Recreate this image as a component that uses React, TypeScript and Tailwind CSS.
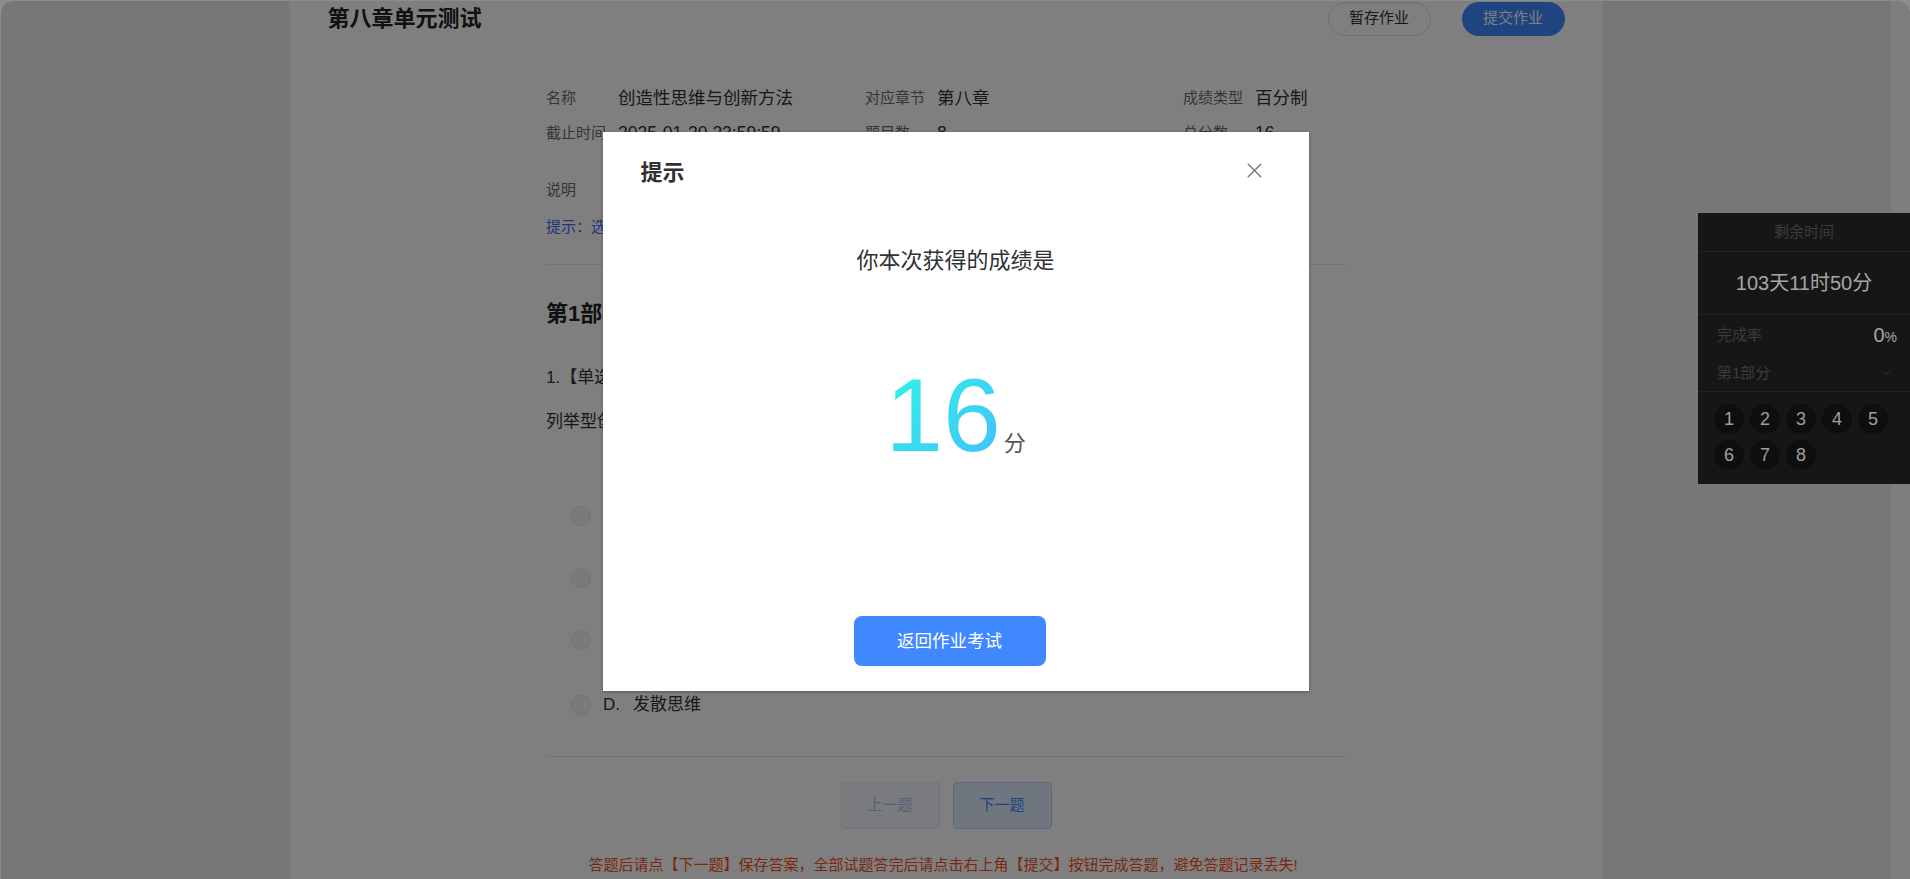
import React from 'react'
import { X, ChevronDown } from 'lucide-react'

const INFO = [
  [
    ['名称', '创造性思维与创新方法'],
    ['对应章节', '第八章'],
    ['成绩类型', '百分制'],
  ],
  [
    ['截止时间', '2025-01-20 23:59:59'],
    ['题目数', '8'],
    ['总分数', '16'],
  ],
]

const OPTIONS = [
  { key: 'A', text: '逆向思维', mt: 'mt-[59px]' },
  { key: 'B', text: '收敛思维', mt: 'mt-[22px]' },
  { key: 'C', text: '联想思维', mt: 'mt-[22px]' },
  { key: 'D', text: '发散思维', mt: 'mt-[25px]' },
]

// 右侧答题卡
const TimerPanel = () => (
  <div className="absolute right-0 top-[212px] z-20 w-[212px] bg-[#161616]">
    <div className="h-[39px] flex items-center justify-center border-b border-[#222] text-[15px] text-[#3c3c3c]">
      剩余时间
    </div>
    <div className="h-[63px] flex items-center justify-center border-b border-[#222] text-[20px] text-[#a6a6a6]">
      103天11时50分
    </div>
    <div className="h-[40px] flex items-center justify-between pl-[19px] pr-[13px]">
      <span className="text-[15px] text-[#3c3c3c]">完成率</span>
      <span className="text-[20px] text-[#a6a6a6]">
        0<span className="text-[14px]">%</span>
      </span>
    </div>
    <div className="h-[37px] flex items-center justify-between pl-[19px] pr-[17px] border-b border-[#222]">
      <span className="text-[15px] text-[#3c3c3c]">第1部分</span>
      <ChevronDown size={14} strokeWidth={1.5} className="text-[#333]" />
    </div>
    <div className="grid grid-cols-[repeat(5,30px)] gap-[6px] pl-[16px] pt-[12px] pb-[14px]">
      {[1, 2, 3, 4, 5, 6, 7, 8].map((n) => (
        <div
          key={n}
          className="w-[30px] h-[30px] rounded-full bg-[#0e0e0e] flex items-center justify-center text-[18px] text-[#9f9f9f]"
        >
          {n}
        </div>
      ))}
    </div>
  </div>
)

// 成绩弹窗
const ScoreDialog = () => (
  <div className="absolute inset-0 z-10 bg-black/50 flex justify-center items-start pt-[131px]">
    <div className="w-[706px] h-[559px] bg-white shadow-[0_1px_3px_rgba(0,0,0,0.3)] flex flex-col">
      <div className="mt-[26px] h-[30px] flex items-center justify-between pl-[38px] pr-[42px]">
        <span className="text-[22px] font-bold text-[#303133] leading-[30px]">提示</span>
        <X size={25} strokeWidth={1.4} className="text-[#7a7c80] -mt-[6px]" />
      </div>
      <div className="mt-[58px] h-[30px] leading-[30px] text-center text-[22px] text-[#303133]">
        你本次获得的成绩是
      </div>
      <div className="mt-[87px] flex justify-center items-baseline">
        <span className="inline-block text-[104px] leading-none bg-linear-to-br from-[#2cf8e0] to-[#44bcff] bg-clip-text text-transparent">
          16
        </span>
        <span className="ml-[3px] text-[22px] text-[#555]">分</span>
      </div>
      <div className="mt-[149px] flex justify-center pr-[12px]">
        <button className="w-[192px] h-[50px] rounded-[8px] bg-[#3f88ff] text-white text-[17.5px]">
          返回作业考试
        </button>
      </div>
    </div>
  </div>
)

export default function App() {
  return (
    <div className="h-[879px] overflow-hidden bg-[#8c8c8c] pl-px pt-px font-['Liberation_Sans','Noto_Sans_CJK_SC',sans-serif]">
      <div className="relative h-full flex rounded-t-[10px] overflow-hidden">
        {/* 页面主体 */}
        <div className="flex-1 bg-[#eeeeee]">
          <div className="w-[1313px] h-full mx-auto bg-white">
            <div className="h-[35px] flex items-center justify-between pl-[38px] pr-[38px]">
              <h1 className="text-[22px] font-bold text-[#222] leading-[30px]">第八章单元测试</h1>
              <div className="flex gap-[31px]">
                <button className="w-[103px] h-[34px] rounded-full border border-[#dcdfe6] bg-white text-[15px] text-[#303133]">
                  暂存作业
                </button>
                <button className="w-[103px] h-[34px] rounded-full bg-[#3f88ff] text-[15px] text-white">
                  提交作业
                </button>
              </div>
            </div>

            <div className="w-[800px] mx-auto">
              <div className="mt-[45px]">
                {INFO.map((row, i) => (
                  <div key={i} className="h-[35px] grid grid-cols-[319px_318px_1fr] items-center">
                    {row.map(([label, value]) => (
                      <div key={label} className="flex items-center">
                        <span className="w-[72px] text-[15px] text-[#6b6b6b]">{label}</span>
                        <span className="text-[17.5px] text-[#303133]">{value}</span>
                      </div>
                    ))}
                  </div>
                ))}
              </div>
              <div className="mt-[22px] h-[35px] flex items-center">
                <span className="w-[72px] text-[15px] text-[#6b6b6b]">说明</span>
              </div>
              <div className="mt-[2px] h-[35px] flex items-center text-[15px] text-[#3f6ef2]">
                提示：选择答案后，请点击【下一题】保存
              </div>
              <div className="mt-[19px] border-t border-[#e4e4e4]" />

              <h2 className="mt-[34px] h-[30px] leading-[30px] text-[22px] font-bold text-[#222]">第1部分 单选题</h2>
              <div className="mt-[34px] h-[30px] leading-[30px] text-[17px] text-[#303133]">1.【单选题】(2分)</div>
              <div className="mt-[14px] h-[30px] leading-[30px] text-[17px] text-[#303133]">
                列举型创新技法主要依靠哪种思维？
              </div>

              {OPTIONS.map((o) => (
                <div key={o.key} className={`${o.mt} h-[40px] flex items-center pl-[25px]`}>
                  <span className="w-[20px] h-[20px] rounded-full bg-[#f4f4f4] border border-[#e6e6e6]" />
                  <span className="ml-[12px] text-[17px] text-[#303133]">{o.key}.</span>
                  <span className="ml-[13px] text-[17px] text-[#303133]">{o.text}</span>
                </div>
              ))}

              <div className="mt-[31px] border-t border-[#e4e4e4]" />
              <div className="mt-[25px] flex justify-center gap-[13px]">
                <button className="w-[99px] h-[47px] rounded-[4px] border border-[#dde8f8] bg-[#f3f7fd] text-[15px] text-[#a6c6f4]">
                  上一题
                </button>
                <button className="w-[99px] h-[47px] rounded-[4px] border border-[#b3d1ff] bg-[#e0ecff] text-[15px] text-[#3f88ff]">
                  下一题
                </button>
              </div>
              <p className="mt-[25px] h-[22px] leading-[22px] text-center text-[15px] text-[#f4511e] whitespace-nowrap pr-[6px]">
                答题后请点【下一题】保存答案，全部试题答完后请点击右上角【提交】按钮完成答题，避免答题记录丢失!
              </p>
            </div>
          </div>
        </div>
        <div className="w-[19px] bg-[#fdfdfd]" />

        <ScoreDialog />
        <TimerPanel />
      </div>
    </div>
  )
}
